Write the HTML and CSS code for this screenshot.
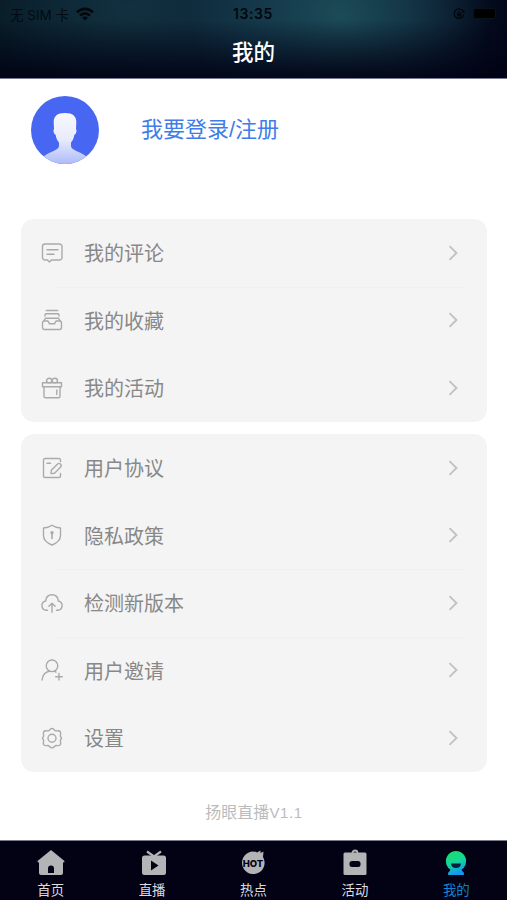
FILE: index.html
```
<!DOCTYPE html>
<html lang="zh-CN">
<head>
    <title>我的</title>
    <meta charset="UTF-8">
    <meta name="viewport" content="width=device-width, initial-scale=1">
    <link rel="stylesheet" href="styles.css">
</head>
<body>
    <header class="header">
        <div class="status">
            <div class="status-left">
                <span class="carrier">无 SIM 卡</span>
                <svg class="wifi" width="18" height="14" viewBox="0 0 18 14">
                    <g fill="none" stroke="#02070b" stroke-width="2.6">
                        <path d="M1 5.2Q9-1.6 17 5.2"/>
                        <path d="M4 8.6Q9 4.3 14 8.6"/>
                    </g>
                    <path d="M6 10.6Q9 8.3 12 10.6L9 13.6z" fill="#02070b"/>
                </svg>
            </div>
            <span class="time">13:35</span>
            <div class="status-right">
                <svg width="12" height="12" viewBox="0 0 13 13" fill="none" stroke="#02070b">
                    <path d="M10.8 3.2A5.2 5.2 0 1 0 11.6 7" stroke-width="1.4"/>
                    <path d="M9.2 4.700l3.400.5-.4-3.700z" fill="#02070b" stroke="none"/>
                    <rect x="4.200" y="5.800" width="4.600" height="3.400" fill="#02070b" stroke="none"/>
                    <path d="M5.200 6V5a1.300 1.300 0 0 1 2.600 0v1"/>
                </svg>
                <span class="battery"></span>
            </div>
        </div>
        <h1 class="title">我的</h1>
    </header>

    <main class="content">
        <section class="profile">
            <svg class="avatar" width="68" height="68" viewBox="0 0 68 68">
                <defs>
                    <linearGradient id="bust" x1="0" y1="0" x2="0" y2="1">
                        <stop offset="0" stop-color="#f8f9fd"/>
                        <stop offset=".5" stop-color="#e8ebfa"/>
                        <stop offset="1" stop-color="#a9b7fa"/>
                    </linearGradient>
                    <clipPath id="round"><circle cx="34" cy="34" r="34"/></clipPath>
                </defs>
                <circle cx="34" cy="34" r="34" fill="#4767f2"/>
                <path clip-path="url(#round)" fill="url(#bust)" d="M34 17c8 0 11.500 3.500 11.300 9.500L45 33c1.200 1.500.2 5.500-1.700 6-.5 3-1.500 5.500-3.300 7.500V50c0 4 9 5.500 15.500 10.500V70h-43v-9.500C19 55.500 28 54 28 50v-3.500c-1.800-2-2.800-4.500-3.300-7.500-1.900-.5-2.900-4.500-1.700-6l-.3-6.500C22.500 20.500 26 17 34 17z"/>
            </svg>
            <a class="login">我要登录/注册</a>
        </section>

        <ul class="card">
            <li class="row">
                <svg class="icon" viewBox="0 0 22 22">
                    <path d="M4 2h14.500a2.500 2.500 0 0 1 2.500 2.500v11a2.500 2.500 0 0 1-2.500 2.500H10.500L8.500 20 6.500 18H4a2.500 2.500 0 0 1-2.500-2.500v-11A2.500 2.500 0 0 1 4 2zM6 7.700h11M6 12.300h7"/>
                </svg>
                <span class="label">我的评论</span>
                <svg class="arrow" viewBox="0 0 10 16"><path d="M1.500 1.200 8.500 8l-7 6.800"/></svg>
            </li>
            <li class="row line">
                <svg class="icon" viewBox="0 0 22 22">
                    <path d="M5.300 1.500h11.400M4 7V6a1.300 1.300 0 0 1 1.300-1.300h11.400A1.300 1.300 0 0 1 18 6v1M4.500 9.300h13M3.500 12H7l1.500 2.800h5L15 12h3.500a2 2 0 0 1 2 2v4.500a2 2 0 0 1-2 2h-15a2 2 0 0 1-2-2V14a2 2 0 0 1 2-2zM2.300 12.300l2.200-3M19.700 12.300l-2.200-3"/>
                </svg>
                <span class="label">我的收藏</span>
                <svg class="arrow" viewBox="0 0 10 16"><path d="M1.500 1.200 8.500 8l-7 6.800"/></svg>
            </li>
            <li class="row">
                <svg class="icon" viewBox="0 0 22 22">
                    <path d="M1.500 5.800h19v4h-19zM3 9.800h16v9.400a1.500 1.500 0 0 1-1.500 1.500h-13A1.500 1.500 0 0 1 3 19.200zM15.800 13v4.500"/>
                    <ellipse cx="8.200" cy="3.600" rx="2.700" ry="2.300"/><ellipse cx="13.800" cy="3.600" rx="2.700" ry="2.300"/>
                </svg>
                <span class="label">我的活动</span>
                <svg class="arrow" viewBox="0 0 10 16"><path d="M1.500 1.200 8.500 8l-7 6.800"/></svg>
            </li>
        </ul>

        <ul class="card">
            <li class="row">
                <svg class="icon" viewBox="0 0 22 22">
                    <path d="M19.500 4.500V3A1.500 1.500 0 0 0 18 1.500H4A1.500 1.500 0 0 0 2.500 3v16A1.500 1.500 0 0 0 4 20.500h14a1.500 1.500 0 0 0 1.500-1.500v-2.500M6 6.300h3.500M10.300 13.200l6-6a2.100 2.100 0 0 1 3.200 3l-6 6-3.500.3z"/>
                </svg>
                <span class="label">用户协议</span>
                <svg class="arrow" viewBox="0 0 10 16"><path d="M1.500 1.200 8.500 8l-7 6.800"/></svg>
            </li>
            <li class="row">
                <svg class="icon" viewBox="0 0 22 22">
                    <path d="M11 1.200c2.500 1.800 5.300 2.600 8.500 2.800v7.500c0 4.500-3.500 7.500-8.500 9.500-5-2-8.500-5-8.500-9.500V4C5.700 3.800 8.500 3 11 1.200z"/>
                    <path d="M11 8.500v6" stroke-width="1.600"/><circle cx="11" cy="8.700" r="1"/>
                </svg>
                <span class="label">隐私政策</span>
                <svg class="arrow" viewBox="0 0 10 16"><path d="M1.500 1.200 8.500 8l-7 6.800"/></svg>
            </li>
            <li class="row line">
                <svg class="icon" viewBox="0 0 22 22">
                    <path d="M6.500 18.300H5.300A4.700 4.700 0 0 1 4.700 9C5 5 7.500 2.700 11 2.700S17 5 17.300 9a4.700 4.700 0 0 1-.6 9.300h-1.200M11 20.200v-8.500M7.900 14.300 11 11.300l3.100 3"/>
                </svg>
                <span class="label">检测新版本</span>
                <svg class="arrow" viewBox="0 0 10 16"><path d="M1.500 1.200 8.500 8l-7 6.800"/></svg>
            </li>
            <li class="row line inset">
                <svg class="icon" viewBox="0 0 22 22">
                    <circle cx="11" cy="6.800" r="5.800"/>
                    <path d="M1 21c.5-5 3-7.800 7-8.800M18 14.500v6.500M14.700 17.700h6.600M13.500 12.200l1.500 1"/>
                </svg>
                <span class="label">用户邀请</span>
                <svg class="arrow" viewBox="0 0 10 16"><path d="M1.500 1.200 8.500 8l-7 6.800"/></svg>
            </li>
            <li class="row">
                <svg class="icon" viewBox="0 0 22 22">
                    <path d="M8.300 3.200Q11-.2 13.700 3.200q1 1 2.500.6 4.300-.4 3.300 3.700-.5 1.500.3 2.500 1.400 1.200 0 2.400-.8 1-.3 2.500 1 4.100-3.300 3.700-1.500-.4-2.500.6-2.700 3.400-5.400 0-1-1-2.500-.6-4.300.4-3.300-3.700.5-1.500-.3-2.500-1.400-1.200 0-2.400.8-1 .3-2.500-1-4.100 3.300-3.700 1.500.4 2.500-.6z"/>
                    <circle cx="11" cy="11.200" r="4"/>
                </svg>
                <span class="label">设置</span>
                <svg class="arrow" viewBox="0 0 10 16"><path d="M1.500 1.200 8.500 8l-7 6.800"/></svg>
            </li>
        </ul>

        <p class="version">扬眼直播<span class="num">V1.1</span></p>
    </main>

    <nav class="tabs">
        <a class="tab">
            <svg width="28" height="28" viewBox="0 0 28 28">
                <path fill="#b3b4b5" d="M14 1 27.500 12q.3 1.500-1.500 1.500V24a2 2 0 0 1-2 2H4a2 2 0 0 1-2-2V13.500Q.2 13.500.5 12z"/>
                <path fill="#020214" d="M11 24v-4.500a3 3 0 0 1 6 0V24z"/>
            </svg>
            <span>首页</span>
        </a>
        <a class="tab">
            <svg class="live" width="28" height="28" viewBox="0 0 28 28">
                <path fill="none" stroke="#b3b4b5" stroke-width="2.200" d="M7 2.500l7 5L21 2.500"/>
                <rect x="2" y="6.500" width="24" height="19.500" rx="2.500" fill="#b3b4b5"/>
                <path fill="#020214" d="M11 11.500v10l7.500-5z"/>
            </svg>
            <span>直播</span>
        </a>
        <a class="tab">
            <svg width="28" height="28" viewBox="0 0 28 28">
                <path fill="#b3b4b5" d="M14 2.500q3 0 4 1L21.500 1.500v2.500l3-1.500L24 8a11.300 11.300 0 1 1-10-5.500z"/>
                <text class="hot" x="14" y="17.500" text-anchor="middle">HOT</text>
            </svg>
            <span>热点</span>
        </a>
        <a class="tab">
            <svg width="28" height="28" viewBox="0 0 28 28">
                <rect x="2.500" y="3.500" width="23" height="22.500" rx="1.500" fill="#b3b4b5"/>
                <path fill="none" stroke="#b3b4b5" stroke-width="1.800" d="M11.500 4a2.500 2.500 0 0 1 5 0"/>
                <rect x="8.500" y="12" width="11" height="6" rx="2.500" fill="#020214"/>
            </svg>
            <span>活动</span>
        </a>
        <a class="tab active">
            <svg width="28" height="28" viewBox="0 0 28 28">
                <defs>
                    <linearGradient id="face" x1="0" y1="0" x2=".35" y2="1">
                        <stop offset="0" stop-color="#19e05a"/>
                        <stop offset=".55" stop-color="#16d69a"/>
                        <stop offset="1" stop-color="#1199f0"/>
                    </linearGradient>
                </defs>
                <path fill="url(#face)" d="M14 2a10.200 10.200 0 0 1 5.500 18.800Q20 22 21.500 23.200q1.500 2.800-1 2.800h-13q-2.500 0-1-2.800Q8 22 8.500 20.800A10.200 10.200 0 0 1 14 2z"/>
                <path fill="#04203a" d="M9 14.500h10q-.5 4.500-5 4.500t-5-4.500z"/>
            </svg>
            <span>我的</span>
        </a>
    </nav>
</body>
</html>
```
FILE: styles.css
```
* { box-sizing: border-box; }
body {
    margin: 0;
    height: 900px;
    display: flex;
    flex-direction: column;
    background: #fff;
    font-family: "Liberation Sans", "Noto Sans CJK SC", sans-serif;
}

/* header */
.header {
    height: 79px;
    border-bottom: 1px solid #777a92;
    background:
        linear-gradient(to bottom, rgba(1,2,20,0) 25%, rgba(1,2,20,0.9) 100%),
        radial-gradient(ellipse 150px 130px at 340px 15px, #1c4b58, rgba(28,75,88,0)),
        radial-gradient(ellipse 180px 110px at 130px 10px, #12303f, rgba(18,48,63,0)),
        linear-gradient(to right, #051720, #0d2840 50%, #0a1c30 80%, #020719);
}
.status {
    display: grid;
    grid-template-columns: 1fr auto 1fr;
    align-items: center;
    height: 27px;
    padding: 0 11px 0 10px;
    color: #02070b;
    font-family: Inter, "Noto Sans CJK SC", sans-serif;
}
.status-left { display: flex; align-items: center; gap: 7px; }
.carrier { font-size: 13.5px; white-space: nowrap; opacity: 0.8; }
.time { font-size: 14px; font-weight: 600; letter-spacing: 0.6px; }
.status-right { display: flex; align-items: center; justify-content: flex-end; gap: 8px; }
.battery {
    width: 23px;
    height: 11px;
    border-radius: 3px;
    border: 1px solid #06141b;
    background: #000;
}
.title {
    margin: 0;
    color: #fff;
    font-size: 21.5px;
    line-height: 52px;
    font-weight: 500;
    text-align: center;
}

/* page body */
.content { flex: 1; padding: 0 20px 0 21px; }
.profile { display: flex; height: 140px; padding: 17px 0 0 10px; }
.avatar { flex: none; }
.login {
    margin-left: 42px;
    color: #3f7de8;
    font-size: 22px;
    line-height: 68px;
}
.card {
    list-style: none;
    margin: 0 0 12px;
    padding: 0;
    border-radius: 13px;
    background: #f4f4f4;
}
.row {
    position: relative;
    display: flex;
    align-items: center;
    height: 67.6px;
    padding: 0 29px 0 20px;
}
.line::before {
    content: "";
    position: absolute;
    top: 0;
    left: 33px;
    right: 23px;
    height: 1px;
    background: #f0f0f0;
}
.icon {
    width: 22px;
    height: 22px;
    fill: none;
    stroke: #aaa;
    stroke-width: 1.4;
    stroke-linecap: round;
    stroke-linejoin: round;
}
.label {
    flex: 1;
    margin-left: 21px;
    color: #888;
    font-size: 20px;
}
.arrow {
    width: 10px;
    height: 16px;
    fill: none;
    stroke: #c0c0c0;
    stroke-width: 1.8;
}
.version {
    margin: 0;
    padding-top: 17px;
    color: #bbb;
    font-size: 16px;
    line-height: 24px;
    text-align: center;
}
.num { font-size: 15px; letter-spacing: 0.6px; }

/* bottom tabs */
.tabs {
    display: grid;
    grid-template-columns: repeat(5, 1fr);
    height: 60px;
    border-top: 1px solid #777a86;
    background: #020214;
}
.tab {
    display: flex;
    flex-direction: column;
    align-items: center;
    padding-top: 8px;
    color: #dcdce0;
    font-size: 13.4px;
    line-height: 28px;
}
.live { margin-left: 3px; }
.active { color: #1283cf; }
.hot { font: 800 9.5px Inter, sans-serif; fill: #020214; }
```
